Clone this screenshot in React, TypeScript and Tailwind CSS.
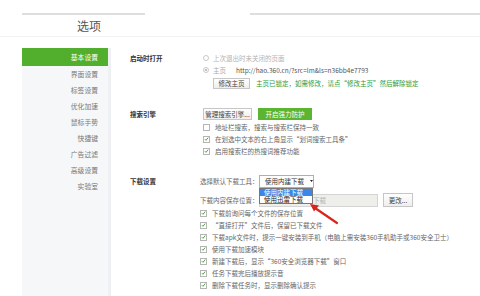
import React from "react";

const F = { fontFamily: '"Noto Sans CJK SC", "Noto Sans", sans-serif' };

function Check({ on = true }: { on?: boolean }) {
  return (
    <span className="w-[7px] h-[7px] border border-[#b5b5b5] bg-white flex items-center justify-center shrink-0">
      {on && (
        <svg width="6" height="6" viewBox="0 0 6 6">
          <path d="M1 3.2 L2.4 4.6 L5 1.3" stroke="#3c9a2c" strokeWidth="1.1" fill="none" />
        </svg>
      )}
    </span>
  );
}

function CRow({ on = true, children }: { on?: boolean; children: React.ReactNode }) {
  return (
    <div className="h-[12px] flex items-center gap-[5px] whitespace-nowrap">
      <Check on={on} />
      <span>{children}</span>
    </div>
  );
}

const side = ["界面设置", "标签设置", "优化加速", "鼠标手势", "快捷键", "广告过滤", "高级设置", "实验室"];

export default function App() {
  return (
    <div style={F} className="w-[480px] h-[296px] bg-white overflow-hidden flex flex-col text-[6.5px] text-[#666] leading-none">
      <div className="h-[48px] shrink-0 flex flex-col">
        <div className="h-[13px] shrink-0" />
        <div className="h-[2px] flex shrink-0">
          <div className="ml-[22px] w-[123px] bg-[#dedede]" />
          <div className="ml-[105px] flex-1 bg-[#dedede]" />
        </div>
        <div className="h-[22px] border-b border-[#f2f2f2] flex items-center pl-[77px] text-[12px] text-[#555]">选项</div>
      </div>
      <div className="flex flex-1">
        <div className="ml-[22px] w-[89px] bg-[#f6f7f9] border-r-[3px] border-[#eef0f3] flex flex-col text-[6.8px] text-[#777] text-right">
          <div className="h-[18px] bg-[#52ae2d] text-white flex items-center justify-end pr-[10px]">基本设置</div>
          {side.map((s) => (
            <div key={s} className="h-[16px] flex items-center justify-end pr-[10px]">{s}</div>
          ))}
        </div>
        <div className="flex-1 pl-[19px] flex flex-col">
          {/* startup */}
          <div className="flex mt-[4px]">
            <div className="w-[73px] h-[12px] flex items-center font-bold text-[#333]">启动时打开</div>
            <div className="flex flex-col">
              <div className="h-[12px] flex items-center gap-[4px] text-[#b3b3b3] whitespace-nowrap">
                <span className="w-[6px] h-[6px] rounded-full border border-[#c8c8c8] bg-white" />
                上次退出时未关闭的页面
              </div>
              <div className="h-[12px] flex items-center gap-[4px] whitespace-nowrap">
                <span className="w-[6px] h-[6px] rounded-full border border-[#c8c8c8] bg-white flex items-center justify-center">
                  <span className="w-[2px] h-[2px] rounded-full bg-[#aaa]" />
                </span>
                <span className="text-[#aaa]">主页</span>
                <span className="ml-[6px] text-[#555]">http://hao.360.cn/?src=lm&amp;ls=n36bb4e7793</span>
              </div>
              <div className="h-[13px] mt-[1px] flex items-center whitespace-nowrap">
                <span className="ml-[10px] h-[11px] w-[37px] border border-[#c6c6c6] bg-gradient-to-b from-white to-[#eee] text-[#444] flex items-center justify-center">修改主页</span>
                <span className="ml-[6px] text-[#2b9a3c]">主页已锁定，如需修改，请点“修改主页”然后解除锁定</span>
              </div>
            </div>
          </div>
          {/* search */}
          <div className="flex mt-[18px]">
            <div className="w-[73px] h-[12px] flex items-center font-bold text-[#333]">搜索引擎</div>
            <div className="flex flex-col">
              <div className="h-[12px] flex items-center gap-[6px] whitespace-nowrap">
                <span className="h-[12px] w-[49px] border border-[#c6c6c6] bg-gradient-to-b from-white to-[#eee] text-[#444] flex items-center justify-center">管理搜索引擎...</span>
                <span className="h-[12px] w-[54px] bg-[#5cb531] text-white flex items-center justify-center">开启强力防护</span>
              </div>
              <div className="mt-[1px]">
                <CRow on={false}>地址栏搜索，搜索与搜索栏保持一致</CRow>
                <CRow>在划选中文本的右上角显示“划词搜索工具条”</CRow>
                <CRow>启用搜索栏的热搜词推荐功能</CRow>
              </div>
            </div>
          </div>
          {/* download */}
          <div className="flex mt-[17px]">
            <div className="w-[70px] h-[14px] flex items-center font-bold text-[#333]">下载设置</div>
            <div className="flex flex-col">
              <div className="h-[14px] flex items-center whitespace-nowrap">
                <span className="w-[59px]">选择默认下载工具：</span>
                <div className="relative">
                  <div className="h-[13px] w-[55px] border border-[#8fcf5f] bg-white text-[#333] flex items-center pl-[5px] gap-[6px]">
                    使用内建下载
                    <svg width="5" height="4" viewBox="0 0 5 4"><path d="M0 0.5 H5 L2.5 3.5Z" fill="#222" /></svg>
                  </div>
                  <div className="absolute left-0 top-[13px] w-[54px] border border-[#777] bg-white z-10 flex flex-col">
                    <div className="h-[7px] bg-[#3b86e6] text-white flex items-center pl-[4px]">使用内建下载</div>
                    <div className="h-[7px] text-[#222] flex items-center pl-[4px]">使用迅雷下载</div>
                  </div>
                </div>
              </div>
              <div className="h-[14px] mt-[5px] flex items-center whitespace-nowrap">
                <span className="w-[59px]">下载内容保存位置：</span>
                <span className="h-[13px] w-[119px] border border-[#d4d4d4] bg-[#eeeeea] text-[#b5b5b5] flex items-center pl-[3px] overflow-hidden">C:\Users\Admin\下载</span>
                <span className="ml-[5px] h-[14px] w-[30px] border border-[#c6c6c6] bg-gradient-to-b from-white to-[#eee] text-[#444] flex items-center justify-center">更改...</span>
              </div>
              <div className="relative">
                <svg className="absolute left-[108px] top-[-4px] z-20" width="32" height="22" viewBox="0 0 32 22">
                  <path d="M29 20 L7 5" stroke="#d8261d" strokeWidth="2.2" strokeLinecap="round" />
                  <path d="M2 1 L11 2.5 L6 8.5 Z" fill="#d8261d" />
                </svg>
                <CRow>下载前询问每个文件的保存位置</CRow>
                <CRow>“直接打开”文件后，保留已下载文件</CRow>
                <CRow>下载apk文件时，提示一键安装到手机（电脑上需安装360手机助手或360安全卫士）</CRow>
                <CRow>使用下载加速模块</CRow>
                <CRow>新建下载后，显示“360安全浏览器下载”窗口</CRow>
                <CRow>任务下载完后播放提示音</CRow>
                <CRow>删除下载任务时，显示删除确认提示</CRow>
              </div>
            </div>
          </div>
        </div>
      </div>
    </div>
  );
}
